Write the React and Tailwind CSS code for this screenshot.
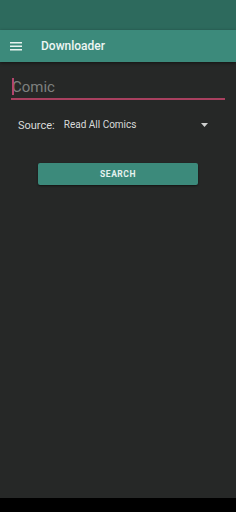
export default function App() {
  return (
    <div className="w-[236px] h-[512px] flex flex-col bg-[#262827] overflow-hidden" style={{ fontFamily: "Roboto, 'Noto Sans', sans-serif" }}>
      <div className="h-[30px] bg-[#2d6a5d] shrink-0" />
      <div className="h-[32px] bg-[#3c8a7b] shrink-0 flex items-center shadow-[0_1px_3px_rgba(0,0,0,0.5)]">
        <div className="w-[41px] flex pl-[10px]">
          <svg width="12" height="10" viewBox="0 0 12 10">
            <rect x="0" y="1" width="12" height="1.5" fill="#e8f3f0" />
            <rect x="0" y="4.5" width="12" height="1.5" fill="#e8f3f0" />
            <rect x="0" y="8" width="12" height="1.5" fill="#e8f3f0" />
          </svg>
        </div>
        <span className="text-[12px] font-medium text-[#eef6f4] leading-none">Downloader</span>
      </div>
      <div className="flex-1 flex flex-col">
        <div className="mx-[11px] mt-[14px] h-[22px] flex items-end pb-[3px] relative">
          <span className="absolute left-[1px] top-[2px] w-[1.5px] h-[17px] bg-[#b2456c]" />
          <span className="text-[15px] leading-none text-[#7e807f] pl-[1px]">Comic</span>
        </div>
        <div className="mx-[11px] h-[2px] bg-[#a8405f]" />
        <div className="flex items-center h-[16px] mt-[17px] pl-[18px] pr-[28px]">
          <span className="text-[11px] text-[#d9dbda] leading-none">Source:</span>
          <span className="text-[10px] text-[#d9dbda] leading-none ml-[9px] flex-1">Read All Comics</span>
          <svg width="7" height="4" viewBox="0 0 7 4">
            <path d="M0 0 L7 0 L3.5 4 Z" fill="#cfd1d0" />
          </svg>
        </div>
        <div className="mt-[30px] mx-[38px] w-[160px] h-[22px] rounded-[2px] bg-[#3c8a7b] flex items-center justify-center pt-[1px] shadow-[0_1px_2px_rgba(0,0,0,0.5)]">
          <span className="text-[8.5px] font-bold tracking-[0.06em] text-[#e6f2ef] leading-none">SEARCH</span>
        </div>
      </div>
      <div className="h-[14px] bg-black shrink-0" />
    </div>
  );
}
